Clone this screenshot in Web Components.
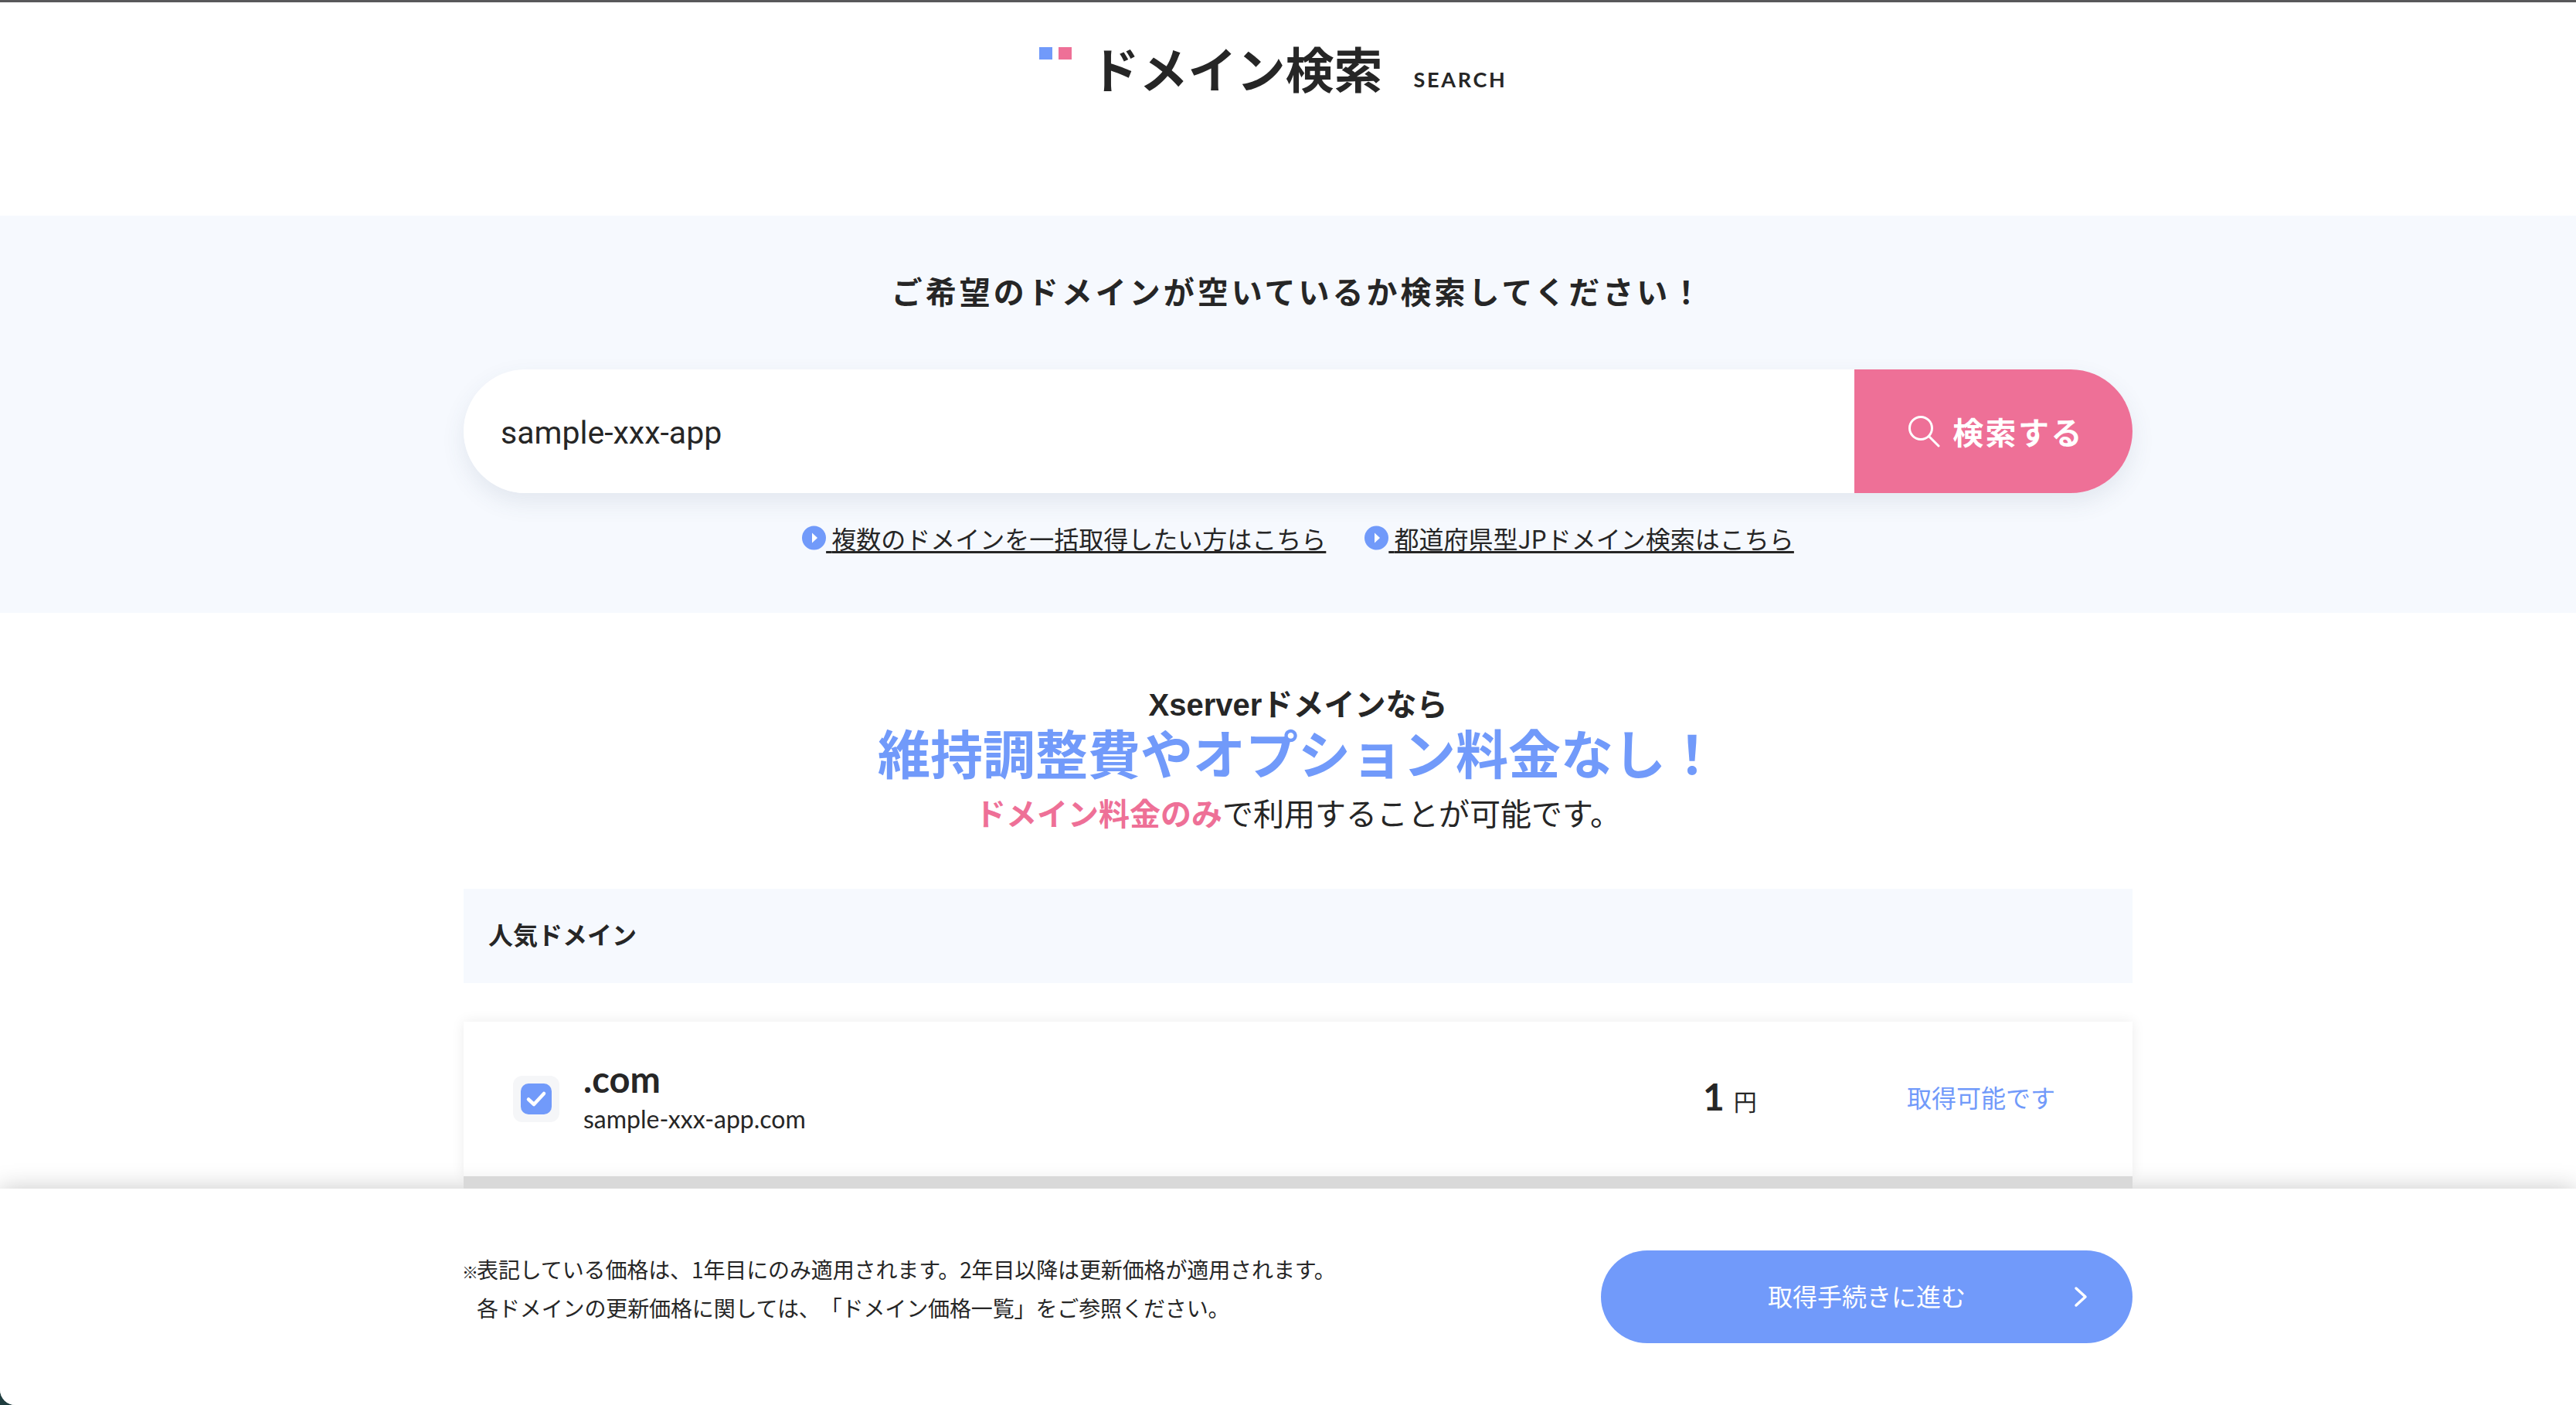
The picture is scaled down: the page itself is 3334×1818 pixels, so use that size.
<!DOCTYPE html>
<html lang="ja">
<head>
<meta charset="utf-8">
<title>ドメイン検索</title>
<style>
  html, body { margin: 0; height: 100%; background: #1f3d3f; overflow: hidden; }
  body {
    --jp: "Noto Sans CJK JP", "Noto Sans", sans-serif;
    --ink: #262626;
    font-family: var(--jp);
    color: var(--ink);
    text-spacing-trim: space-all;
  }
</style>
</head>
<body>
<domain-page>
  <page-title sub="SEARCH">ドメイン検索</page-title>
  <search-band value="sample-xxx-app">
    <band-link slot="links">複数のドメインを一括取得したい方はこちら</band-link>
    <band-link slot="links">都道府県型JPドメイン検索はこちら</band-link>
  </search-band>
  <promo-copy></promo-copy>
  <domain-list heading="人気ドメイン">
    <domain-row tld=".com" name="sample-xxx-app.com" price="1" status="取得可能です"></domain-row>
  </domain-list>
  <checkout-bar slot="footer"></checkout-bar>
</domain-page>

<script>
/* small helper: every component is a template + an open shadow root */
function component(tag, html, init) {
  const tpl = document.createElement('template');
  tpl.innerHTML = html;
  customElements.define(tag, class extends HTMLElement {
    constructor() {
      super();
      this.attachShadow({ mode: 'open' });
      this.shadowRoot.appendChild(tpl.content.cloneNode(true));
    }
    connectedCallback() {
      if (init) init(this, this.shadowRoot);
    }
  });
}

component('domain-page', `
  <style>
    :host {
      display: flex;
      flex-direction: column;
      position: relative;
      width: 100%;
      height: 100vh;
      box-sizing: border-box;
      padding-left: 26px;
      background: #fff;
      border-top: 3px solid #58585a;
      border-radius: 0 0 0 20px;
      overflow: hidden;
    }
    .foot { position: absolute; left: 0; right: 0; bottom: 0; z-index: 1; }
  </style>
  <slot></slot>
  <div class="foot"><slot name="footer"></slot></div>
`);

component('page-title', `
  <style>
    :host {
      display: flex;
      justify-content: center;
      align-items: flex-start;
      height: 276px;
      box-sizing: border-box;
      padding: 42px 64px 0 0;
    }
    .marks { display: flex; gap: 8px; margin: 16px 24px 0 0; }
    .marks i { display: block; width: 17px; height: 16px; background: #719afa; }
    .marks i + i { background: #ee7097; }
    h1 { margin: 0; font-size: 63px; line-height: 84px; font-weight: 700; }
    span { font: 700 27px/1 Lato, sans-serif; letter-spacing: .1em; margin: 44px 0 0 40px; }
  </style>
  <div class="marks"><i></i><i></i></div>
  <h1><slot></slot></h1>
  <span id="sub"></span>
`, (el, root) => { root.getElementById('sub').textContent = el.getAttribute('sub'); });

component('search-band', `
  <style>
    :host {
      display: block;
      background: #f6f9fe;
      height: 514px;
      margin-left: -26px;
      box-sizing: border-box;
      padding: 67px 0 0 26px;
    }
    h2 { margin: 0; text-align: center; font-size: 40px; line-height: 60px; font-weight: 700; letter-spacing: .1em; }
    .wrap { border-radius: 80px; width: 2160px; margin: 72px auto 0; box-shadow: 0 12px 30px rgba(60, 80, 110, .1); }
    form {
      display: flex;
      height: 160px;
      margin: 0;
      border-radius: 80px;
      overflow: hidden;
    }
    .field {
      flex: 1;
      display: flex;
      align-items: center;
      padding: 3px 0 0 48px;
      background: #fff;
      font: 400 41px Roboto, sans-serif;
    }
    .go {
      display: flex;
      align-items: center;
      justify-content: center;
      gap: 16px;
      width: 360px;
      box-sizing: border-box;
      padding-left: 6px;
      background: #ee7097;
      color: #fff;
      font-size: 40px;
      font-weight: 700;
      letter-spacing: .06em;
    }
    svg { display: block; width: 42px; height: 42px; }
    .links { display: flex; justify-content: center; gap: 50px; margin-top: 34px; }
  </style>
  <h2>ご希望のドメインが空いているか検索してください！</h2>
  <div class="wrap">
    <form>
      <div class="field" id="val"></div>
      <div class="go">
        <svg viewBox="0 0 42 42" fill="none" stroke="#fff" stroke-width="3" stroke-linecap="round"><circle cx="17" cy="17" r="14.5"/><path d="M27.5 27.5 40 40"/></svg>
        検索する
      </div>
    </form>
  </div>
  <div class="links"><slot name="links"></slot></div>
`, (el, root) => { root.getElementById('val').textContent = el.getAttribute('value'); });

component('band-link', `
  <style>
    :host { display: flex; align-items: center; font-size: 32px; line-height: 48px; }
    svg { display: block; width: 31px; height: 32px; }
    a { color: inherit; text-decoration: underline; text-decoration-thickness: 2.5px; text-underline-offset: 3px; }
    .w { display: flex; align-items: center; }
  </style>
  <div class="w">
    <svg viewBox="0 0 31 32"><circle cx="15.5" cy="16" r="15.5" fill="#719afa"/><path d="M13 9.5 20 16 13 22.5Z" fill="#fff"/></svg>
    <a href="#">&nbsp;<slot></slot></a>
  </div>
`);

component('promo-copy', `
  <style>
    :host { display: block; text-align: center; padding-top: 93px; height: 357px; box-sizing: border-box; font-family: "Liberation Sans", "Noto Sans CJK JP", sans-serif; }
    p { margin: 0; }
    .a { font-size: 40px; line-height: 52px; font-weight: 700; }
    .b { font-size: 68px; line-height: 80px; font-weight: 700; color: #719afa; }
    .c { font-size: 40px; line-height: 56px; margin-top: 8px; }
    b { color: #ee7097; }
  </style>
  <p class="a">Xserverドメインなら</p>
  <p class="b">維持調整費やオプション料金なし！</p>
  <p class="c"><b>ドメイン料金のみ</b>で利用することが可能です。</p>
`);

component('domain-list', `
  <style>
    :host { display: block; width: 2160px; margin: 0 auto; }
    h3 {
      margin: 0;
      height: 122px;
      box-sizing: border-box;
      padding: 0 0 6px 32px;
      display: flex;
      align-items: center;
      background: #f6f9fe;
      font-size: 32px;
      font-weight: 700;
    }
    .rows { margin-top: 50px; }
    .edge { position: relative; z-index: 2; height: 16px; background: #d9d9d9; }
  </style>
  <h3 id="h"></h3>
  <div class="rows"><slot></slot></div>
  <div class="edge"></div>
`, (el, root) => { root.getElementById('h').textContent = el.getAttribute('heading'); });

component('domain-row', `
  <style>
    :host {
      display: grid;
      grid-template-columns: 60px 1fr 264px 292px;
      align-items: center;
      height: 200px;
      box-sizing: border-box;
      padding: 0 0 0 64px;
      background: #fff;
      box-shadow: 0 0 16px rgba(0, 0, 0, .08);
    }
    .check { width: 60px; height: 60px; border-radius: 12px; background: #f5f6f8; display: flex; align-items: center; justify-content: center; }
    .check svg { display: block; width: 40px; height: 40px; }
    .who { padding-left: 31px; margin-bottom: 4px; }
    .tld { font: 700 47px/52px Lato, sans-serif; }
    .name { font: 400 32px/44px Lato, sans-serif; margin-top: 4px; }
    .price { display: flex; align-items: baseline; gap: 12px; margin-bottom: 4px; }
    .price b { font: 700 48px/1 Lato, sans-serif; }
    .price span { font-size: 30px; }
    .status { color: #719afa; font-size: 32px; margin-bottom: 7px; }
  </style>
  <div class="check">
    <svg viewBox="0 0 40 40"><rect width="40" height="40" rx="10" fill="#719afa"/><path d="M10 20.5 17 27 30 13" fill="none" stroke="#fff" stroke-width="4.5" stroke-linecap="round" stroke-linejoin="round"/></svg>
  </div>
  <div class="who"><div class="tld" id="tld"></div><div class="name" id="name"></div></div>
  <div class="price"><b id="price"></b><span>円</span></div>
  <div class="status" id="status"></div>
`, (el, root) => {
  for (const k of ['tld', 'name', 'price', 'status']) root.getElementById(k).textContent = el.getAttribute(k);
});

component('checkout-bar', `
  <style>
    :host {
      display: block;
      height: 280px;
      padding-left: 26px;
      background: #fff;
      box-shadow: 0 0 30px rgba(0, 0, 0, .22);
    }
    .in {
      width: 2160px;
      height: 100%;
      margin: 0 auto;
      display: flex;
      align-items: center;
      justify-content: space-between;
    }
    p { margin: -22px 0 0; font-size: 28px; line-height: 50px; letter-spacing: -.12px; }
    .mark { display: inline-block; width: 19px; margin-left: -2px; font-size: 21px; font-weight: 700; line-height: 1; }
    .btn {
      width: 688px;
      height: 120px;
      box-sizing: border-box;
      padding-bottom: 5px;
      border-radius: 60px;
      background: #719afa;
      color: #fff;
      display: flex;
      align-items: center;
      justify-content: center;
      position: relative;
      font-size: 32px;
    }
    .btn svg { position: absolute; right: 58px; top: 46px; width: 18px; height: 28px; }
  </style>
  <div class="in">
    <p><span class="mark">※</span>表記している価格は、1年目にのみ適用されます。2年目以降は更新価格が適用されます。<br><span class="mark"></span>各ドメインの更新価格に関しては、「ドメイン価格一覧」をご参照ください。</p>
    <div class="btn">取得手続きに進む
      <svg viewBox="0 0 18 28" fill="none" stroke="#fff" stroke-width="3.5" stroke-linecap="round" stroke-linejoin="round"><path d="M3 3 15 14 3 25"/></svg>
    </div>
  </div>
`);
</script>
</body>
</html>
